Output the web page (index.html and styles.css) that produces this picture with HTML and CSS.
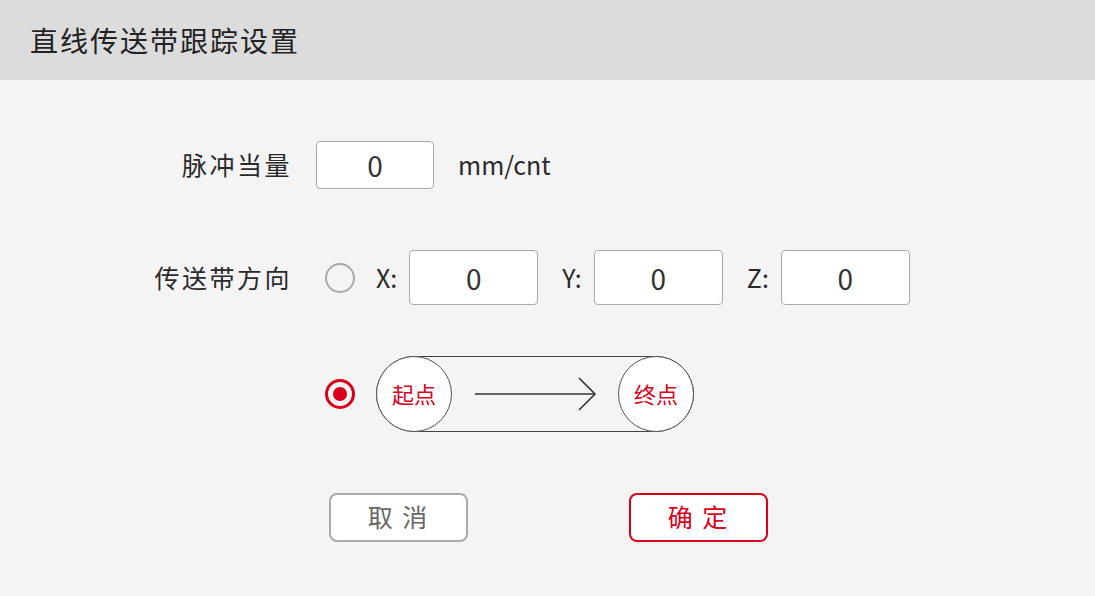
FILE: index.html
```html
<!DOCTYPE html>
<html lang="zh">
<head>
<meta charset="utf-8">
<link rel="stylesheet" href="styles.css">
</head>
<body>
<div class="header">直线传送带跟踪设置</div>
<div class="content">
  <div class="row row1">
    <div class="label">脉冲当量</div>
    <div class="field f1">0</div>
    <div class="unit">mm/cnt</div>
  </div>
  <div class="row row2">
    <div class="label">传送带方向</div>
    <span class="radio"></span>
    <span class="axis ax">X:</span>
    <div class="field f2">0</div>
    <span class="axis">Y:</span>
    <div class="field f2">0</div>
    <span class="axis">Z:</span>
    <div class="field f2">0</div>
  </div>
  <div class="row row3">
    <div class="label"></div>
    <span class="radio on"></span>
    <div class="belt">
      <div class="node">起点</div>
      <svg class="arrow" width="122" height="34" viewBox="0 0 122 34">
        <path d="M0 17 H120" stroke="#333" stroke-width="1.6" fill="none"/>
        <path d="M104 1 L120 17 L104 33" stroke="#333" stroke-width="1.6" fill="none"/>
      </svg>
      <div class="node">终点</div>
    </div>
  </div>
  <div class="row buttons">
    <div class="btn cancel">取 消</div>
    <div class="btn ok">确 定</div>
  </div>
</div>
</body>
</html>
```
FILE: styles.css
```css
* { box-sizing: border-box; }
html, body { margin: 0; padding: 0; }
body {
  width: 1095px;
  height: 596px;
  background: #f4f4f4;
  font-family: "Noto Sans CJK SC", "Noto Sans", sans-serif;
  color: #333;
  overflow: hidden;
}
.header {
  height: 80px;
  background: #dcdcdc;
  padding-left: 30px;
  display: flex;
  align-items: center;
  font-size: 28px;
  letter-spacing: 2px;
  color: #222;
}
.content { display: flex; flex-direction: column; }
.row { display: flex; align-items: center; }
.row1 { margin-top: 61px; height: 48px; }
.row2 { margin-top: 61px; height: 55px; }
.row3 { margin-top: 51px; height: 76px; }
.label {
  width: 292px;
  text-align: right;
  font-size: 25px;
  letter-spacing: 2.5px;
  color: #2a2a2a;
  padding-bottom: 2px;
}
.field {
  background: #fff;
  border: 1.5px solid #aaa;
  border-radius: 4px;
  display: flex;
  align-items: center;
  justify-content: center;
  font-size: 28px;
  color: #333;
}
.f1 { width: 118px; height: 48px; margin-left: 24px; }
.f2 { width: 129px; height: 55px; margin-left: 12px; }
.unit { margin-left: 24px; font-size: 25px; color: #2a2a2a; padding-bottom: 2px; }
.radio {
  width: 30px;
  height: 30px;
  border-radius: 50%;
  border: 2.5px solid #aaa;
  margin-left: 33px;
  flex: none;
  display: flex;
  align-items: center;
  justify-content: center;
}
.radio.on { border: 3px solid #d9001b; }
.radio.on::after {
  content: "";
  width: 14px;
  height: 14px;
  border-radius: 50%;
  background: #d9001b;
}
.axis { font-size: 25px; color: #2a2a2a; margin-left: 24px; padding-bottom: 2px; }
.ax { margin-left: 21px; }
.belt {
  margin-left: 21px;
  width: 318px;
  height: 76px;
  border: 1px solid #444;
  border-radius: 38px;
  display: flex;
  align-items: center;
  justify-content: space-between;
}
.node {
  width: 76px;
  height: 76px;
  margin: -1px;
  border-radius: 50%;
  border: 1px solid #555;
  background: #fff;
  display: flex;
  align-items: center;
  justify-content: center;
  font-size: 22px;
  color: #d9001b;
  flex: none;
  padding-bottom: 2px;
}
.arrow { display: block; margin-left: 2px; }
.buttons { margin-top: 61px; padding-left: 329px; gap: 161px; }
.btn {
  width: 139px;
  height: 49px;
  border: 2px solid #aaa;
  border-radius: 8px;
  background: #fff;
  display: flex;
  align-items: center;
  justify-content: center;
  font-size: 25px;
  letter-spacing: 2px;
  color: #666;
  padding-bottom: 3px;
}
.btn.ok { border-color: #d9001b; color: #d9001b; }
```
